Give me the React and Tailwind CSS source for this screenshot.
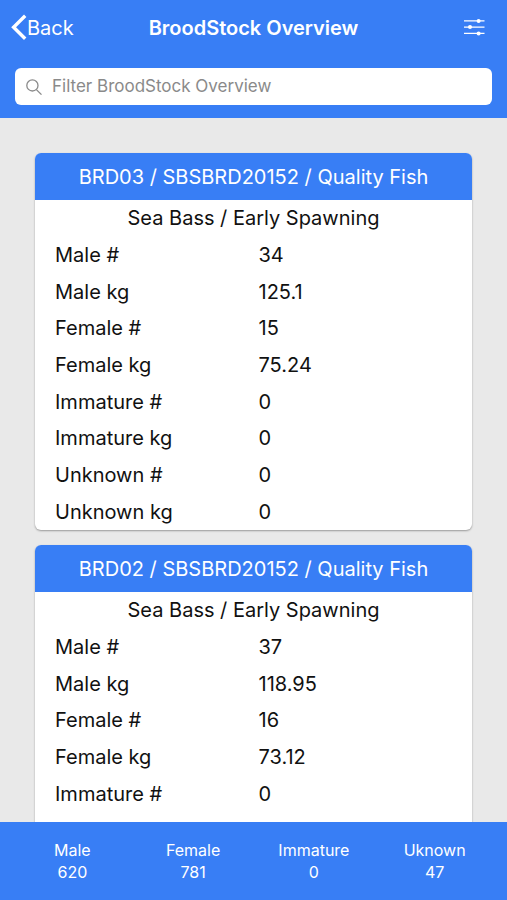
import React, { useState } from 'react';

const broodStocks = [
  {
    tank: 'BRD03',
    batch: 'SBSBRD20152',
    supplier: 'Quality Fish',
    species: 'Sea Bass / Early Spawning',
    rows: [
      ['Male #', '34'],
      ['Male kg', '125.1'],
      ['Female #', '15'],
      ['Female kg', '75.24'],
      ['Immature #', '0'],
      ['Immature kg', '0'],
      ['Unknown #', '0'],
      ['Unknown kg', '0'],
    ],
  },
  {
    tank: 'BRD02',
    batch: 'SBSBRD20152',
    supplier: 'Quality Fish',
    species: 'Sea Bass / Early Spawning',
    rows: [
      ['Male #', '37'],
      ['Male kg', '118.95'],
      ['Female #', '16'],
      ['Female kg', '73.12'],
      ['Immature #', '0'],
      ['Immature kg', '0'],
      ['Unknown #', '0'],
      ['Unknown kg', '0'],
    ],
  },
];

const totals = [
  { label: 'Male', value: 620 },
  { label: 'Female', value: 781 },
  { label: 'Immature', value: 0 },
  { label: 'Uknown', value: 47 },
];

const BackIcon = () => (
  <svg className="w-4 h-7" viewBox="0 0 16 28" fill="none" stroke="currentColor" strokeWidth="3.4" aria-hidden="true">
    <path d="M14.2 1.8 L2.6 13.2 L14.2 24.8" />
  </svg>
);

const OptionsIcon = () => (
  <svg className="w-6 h-6" viewBox="0 0 24 24" fill="currentColor" stroke="currentColor" strokeWidth="1.4" aria-hidden="true">
    <path d="M2 4.9H22.5M2 11.1H22.5M2 17.4H22.5" />
    <circle cx="16.6" cy="4.9" r="2" stroke="none" />
    <circle cx="8" cy="11.1" r="2" stroke="none" />
    <circle cx="16.6" cy="17.4" r="2" stroke="none" />
  </svg>
);

const SearchIcon = () => (
  <svg className="w-4 h-4 shrink-0 text-[#8a8a8a]" viewBox="0 0 16 16" fill="none" stroke="currentColor" strokeWidth="1.3" aria-hidden="true">
    <circle cx="6.4" cy="6.4" r="5.6" />
    <path d="M10.4 10.6 L15.5 15.6" />
  </svg>
);

const StockCard = ({ stock }) => (
  <article className="shrink-0 overflow-hidden rounded-md bg-white shadow-[0_1px_2px_rgba(0,0,0,0.35)]">
    <h2 className="bg-[#387ef5] pt-px text-center text-xl leading-[46px] text-white">
      {stock.tank} / {stock.batch} / {stock.supplier}
    </h2>
    <table className="h-[330px] w-full table-fixed text-xl leading-6 text-[#111111]">
      <tbody>
        <tr>
          <th colSpan={2} className="p-0 text-center font-normal">{stock.species}</th>
        </tr>
        {stock.rows.map(([label, value]) => (
          <tr key={label}>
            <th scope="row" className="p-0 pl-5 text-left font-normal">{label}</th>
            <td className="p-0 pl-[5px]">{value}</td>
          </tr>
        ))}
      </tbody>
    </table>
  </article>
);

const App = () => {
  const [filter, setFilter] = useState('');

  const visible = broodStocks.filter((stock) =>
    `${stock.tank} ${stock.batch} ${stock.supplier} ${stock.species}`.toLowerCase().includes(filter.toLowerCase())
  );

  return (
    <div className="flex h-screen flex-col bg-[#e9e9e9] font-['Inter',sans-serif]">
      {/* Header */}
      <header className="shrink-0 bg-[#387ef5] px-[15px] pb-[13px] text-white">
        <div className="grid h-14 grid-cols-[1fr_auto_1fr] items-center">
          <button type="button" className="-ml-1 flex items-center justify-self-start text-xl">
            <BackIcon />
            Back
          </button>
          <h1 className="text-xl font-semibold">BroodStock Overview</h1>
          <button type="button" aria-label="Options" className="mr-[6px] justify-self-end">
            <OptionsIcon />
          </button>
        </div>
        <label className="mt-3 flex h-[37px] items-center gap-[10px] rounded-md bg-white px-[11px]">
          <SearchIcon />
          <input
            type="search"
            aria-label="Filter BroodStock Overview"
            placeholder="Filter BroodStock Overview"
            value={filter}
            onChange={(e) => setFilter(e.target.value)}
            className="min-w-0 flex-1 text-[17px] text-black outline-none placeholder:text-[#8a8a8a]"
          />
        </label>
      </header>

      {/* Cards */}
      <main className="flex min-h-0 flex-1 flex-col gap-[15px] overflow-y-auto px-[35px] py-[35px] [scrollbar-width:none]">
        {visible.map((stock) => (
          <StockCard key={stock.tank} stock={stock} />
        ))}
      </main>

      {/* Totals */}
      <footer className="shrink-0 bg-[#387ef5] px-3 py-[17px] text-white">
        <dl className="grid grid-cols-4 text-center text-base leading-[22px]">
          {totals.map((total) => (
            <div key={total.label}>
              <dt>{total.label}</dt>
              <dd>{total.value}</dd>
            </div>
          ))}
        </dl>
      </footer>
    </div>
  );
};

export default App;
